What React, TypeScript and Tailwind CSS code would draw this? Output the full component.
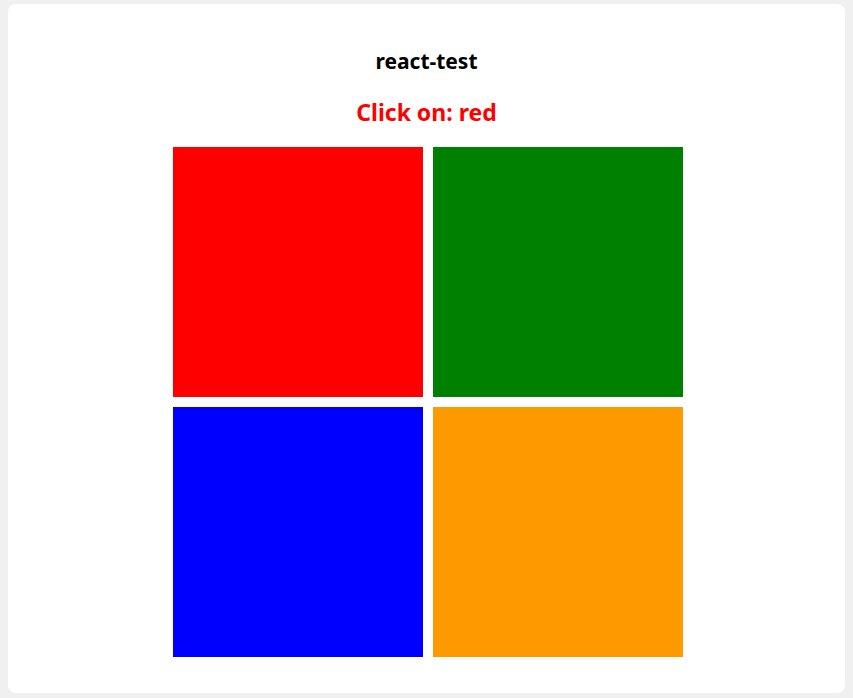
import React, { useState } from 'react';

const colors = [
  { name: 'red', cls: 'bg-[#ff0000]' },
  { name: 'green', cls: 'bg-[#008000]' },
  { name: 'blue', cls: 'bg-[#0000ff]' },
  { name: 'orange', cls: 'bg-[#ff9900]' },
];

const App: React.FC = () => {
  const [target] = useState('red');
  const [, setPicked] = useState<string | null>(null);

  return (
    <div className="h-[698px] bg-[#f0f0f0] pt-[4px] pb-[5px] pl-[8px] pr-[8px] font-['Noto_Sans',sans-serif]">
      <div className="h-full bg-white rounded-[8px] flex flex-col items-center">
        <h1 className="mt-[43px] text-[21px] leading-[28px] font-bold text-black">react-test</h1>
        <p className="mt-[21px] text-[23px] leading-[32px] font-bold text-[#ff0000]">Click on: {target}</p>
        <div className="mt-[19px] ml-[2px] grid grid-cols-2 gap-[10px]">
          {colors.map((c) => (
            <button
              key={c.name}
              onClick={() => setPicked(c.name)}
              className={`w-[250px] h-[250px] ${c.cls}`}
            />
          ))}
        </div>
      </div>
    </div>
  );
};

export default App;
